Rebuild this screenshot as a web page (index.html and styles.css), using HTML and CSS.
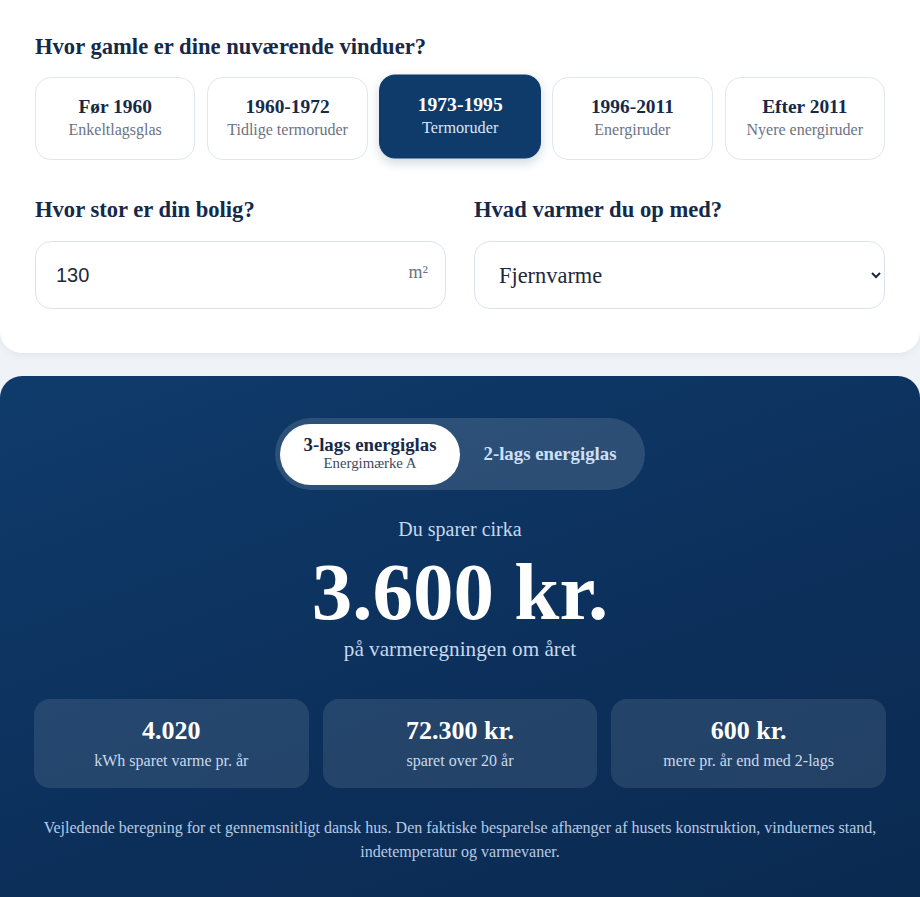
FILE: index.html
```html
<!DOCTYPE html>
<html lang="da">
<head>
<meta charset="utf-8">
<title>Besparelse</title>
<link rel="stylesheet" href="styles.css">
</head>
<body>
<div class="page">
  <section class="form-card">
    <h2 class="q-title">Hvor gamle er dine nuværende vinduer?</h2>
    <div class="age-grid">
      <button class="age-btn"><span class="age-title">Før 1960</span><span class="age-sub">Enkeltlagsglas</span></button>
      <button class="age-btn"><span class="age-title">1960-1972</span><span class="age-sub">Tidlige termoruder</span></button>
      <button class="age-btn active"><span class="age-title">1973-1995</span><span class="age-sub">Termoruder</span></button>
      <button class="age-btn"><span class="age-title">1996-2011</span><span class="age-sub">Energiruder</span></button>
      <button class="age-btn"><span class="age-title">Efter 2011</span><span class="age-sub">Nyere energiruder</span></button>
    </div>
    <div class="two-col">
      <div class="field">
        <h2 class="q-title">Hvor stor er din bolig?</h2>
        <div class="input-wrap">
          <input class="num-input" type="text" value="130">
          <span class="unit">m²</span>
        </div>
      </div>
      <div class="field">
        <h2 class="q-title">Hvad varmer du op med?</h2>
        <select class="heat-select">
          <option>Fjernvarme</option>
          <option>Naturgas</option>
          <option>Oliefyr</option>
          <option>Varmepumpe</option>
          <option>Elvarme</option>
        </select>
      </div>
    </div>
  </section>

  <section class="result-card">
    <div class="toggle-row">
      <div class="toggle">
        <button class="tog active"><span class="tog-title">3-lags energiglas</span><span class="tog-sub">Energimærke A</span></button>
        <button class="tog"><span class="tog-title">2-lags energiglas</span></button>
      </div>
    </div>
    <p class="save-pre">Du sparer cirka</p>
    <p class="save-big">3.600 kr.</p>
    <p class="save-post">på varmeregningen om året</p>
    <div class="stats">
      <div class="stat"><span class="stat-val">4.020</span><span class="stat-lbl">kWh sparet varme pr. år</span></div>
      <div class="stat"><span class="stat-val">72.300 kr.</span><span class="stat-lbl">sparet over 20 år</span></div>
      <div class="stat"><span class="stat-val">600 kr.</span><span class="stat-lbl">mere pr. år end med 2-lags</span></div>
    </div>
    <p class="note">Vejledende beregning for et gennemsnitligt dansk hus. Den faktiske besparelse afhænger af husets konstruktion, vinduernes stand, indetemperatur og varmevaner.</p>
  </section>
</div>
</body>
</html>
```

FILE: styles.css
```css
* { box-sizing: border-box; }
html, body { margin: 0; padding: 0; }
body {
  background: #eff3f8;
  font-family: "Liberation Serif", "Times New Roman", serif;
  color: #15294a;
}
.page { width: 920px; }

.form-card {
  background: #ffffff;
  border-radius: 0 0 22px 22px;
  border-bottom: 1px solid #e2e7ef;
  box-shadow: 0 2px 6px rgba(20, 40, 80, 0.05);
  padding: 34px 35px 44px;
}
.q-title {
  margin: 0;
  font-size: 22.6px;
  line-height: 26px;
  font-weight: 700;
  color: #15294a;
}
.age-grid {
  display: grid;
  grid-template-columns: repeat(5, 1fr);
  gap: 12px;
  margin-top: 17px;
}
.age-btn {
  display: flex;
  flex-direction: column;
  align-items: center;
  justify-content: center;
  height: 83px;
  background: #fff;
  border: 1px solid #e0e5ee;
  border-radius: 16px;
  font-family: inherit;
  padding: 0 0 2px;
  gap: 2px;
}
.age-title {
  font-size: 19.4px;
  line-height: 22px;
  font-weight: 700;
  color: #15294a;
}
.age-sub {
  font-size: 16px;
  line-height: 20px;
  color: #6b7383;
}
.age-btn.active {
  background: #0f3b6b;
  border-color: #0f3b6b;
  transform: translateY(-2px) scale(1.012);
  box-shadow: 0 4px 10px rgba(15, 59, 107, 0.2);
}
.age-btn.active .age-title { color: #ffffff; }
.age-btn.active .age-sub { color: #dbe6f3; }

.two-col {
  display: grid;
  grid-template-columns: 1fr 1fr;
  gap: 28px;
  margin-top: 37px;
}
.field .q-title { margin-bottom: 18px; }
.input-wrap {
  display: flex;
  align-items: center;
  height: 68px;
  border: 1px solid #dde3ee;
  border-radius: 16px;
  padding: 0 17px 0 20px;
  background: #fff;
}
.num-input {
  flex: 1;
  border: none;
  outline: none;
  font-family: "Liberation Sans", Arial, sans-serif;
  font-size: 20px;
  color: #1f2937;
  padding: 0;
  background: transparent;
  min-width: 0;
}
.unit {
  font-size: 18px;
  color: #6b7383;
  margin-top: -6px;
}
.heat-select {
  width: 100%;
  height: 68px;
  border: 1px solid #dde3ee;
  border-radius: 16px;
  background: #fff;
  padding: 0 13px 0 20px;
  font-family: "Liberation Serif", "Times New Roman", serif;
  font-size: 22.4px;
  color: #1f2937;
}

.result-card {
  margin-top: 22px;
  border-radius: 22px 22px 0 0;
  background: linear-gradient(160deg, #0f3b6b 0%, #0c2f5a 60%, #0a2a50 100%);
  padding: 42px 34px 40px;
  color: #fff;
  text-align: center;
}
.toggle-row { display: flex; justify-content: center; }
.toggle {
  display: flex;
  align-items: center;
  height: 72px;
  padding: 5px;
  border-radius: 36px;
  background: rgba(255, 255, 255, 0.13);
}
.tog {
  display: flex;
  flex-direction: column;
  align-items: center;
  justify-content: center;
  width: 180px;
  height: 61px;
  border: none;
  border-radius: 31px;
  background: transparent;
  font-family: inherit;
  padding: 0 0 2px;
}
.tog.active { background: #ffffff; }
.tog-title {
  font-size: 18.8px;
  line-height: 21px;
  font-weight: 700;
  color: #cfe0f6;
}
.tog.active .tog-title { color: #15294a; }
.tog-sub {
  font-size: 14.8px;
  line-height: 17px;
  color: #3e4a5c;
}
.save-pre {
  margin: 27px 0 0;
  font-size: 20px;
  line-height: 24px;
  color: #c8d8ee;
}
.save-big {
  margin: 9px 0 0;
  font-size: 81px;
  line-height: 84px;
  font-weight: 700;
  color: #ffffff;
}
.save-post {
  margin: 3px 0 0;
  font-size: 21.2px;
  line-height: 24px;
  color: #c8d8ee;
}
.stats {
  display: grid;
  grid-template-columns: repeat(3, 1fr);
  gap: 14px;
  margin-top: 38px;
}
.stat {
  display: flex;
  flex-direction: column;
  align-items: center;
  justify-content: center;
  height: 89px;
  border-radius: 16px;
  background: rgba(255, 255, 255, 0.1);
  gap: 5px;
}
.stat-val {
  font-size: 26px;
  line-height: 30px;
  font-weight: 700;
  color: #ffffff;
}
.stat-lbl {
  font-size: 16px;
  line-height: 20px;
  color: #cad9ec;
}
.note {
  margin: 28px 0 0;
  font-size: 16px;
  line-height: 24px;
  color: #b8cae2;
}
```
